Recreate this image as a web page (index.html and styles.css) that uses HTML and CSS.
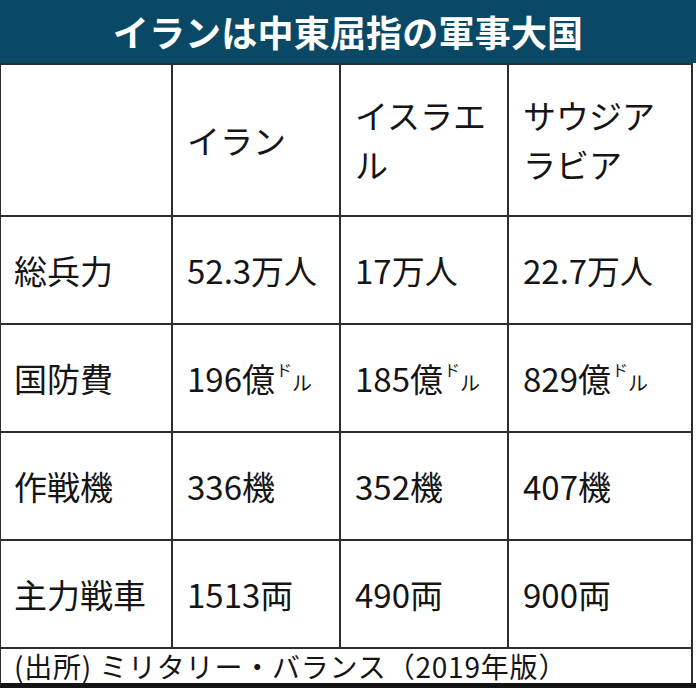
FILE: index.html
```html
<!DOCTYPE html>
<html lang="ja">
<head>
<meta charset="utf-8">
<title>イランは中東屈指の軍事大国</title>
<link rel="stylesheet" href="styles.css">
</head>
<body>
<div class="frame">
  <header class="title">イランは中東屈指の軍事大国</header>
  <div class="table">
    <div class="cell head"></div>
    <div class="cell head">イラン</div>
    <div class="cell head">イスラエ<br>ル</div>
    <div class="cell head">サウジア<br>ラビア</div>

    <div class="cell">総兵力</div>
    <div class="cell">52.3万人</div>
    <div class="cell">17万人</div>
    <div class="cell">22.7万人</div>

    <div class="cell">国防費</div>
    <div class="cell">196億<span class="unit"><span class="do">ド</span><span class="ru">ル</span></span></div>
    <div class="cell">185億<span class="unit"><span class="do">ド</span><span class="ru">ル</span></span></div>
    <div class="cell">829億<span class="unit"><span class="do">ド</span><span class="ru">ル</span></span></div>

    <div class="cell">作戦機</div>
    <div class="cell">336機</div>
    <div class="cell">352機</div>
    <div class="cell">407機</div>

    <div class="cell">主力戦車</div>
    <div class="cell">1513両</div>
    <div class="cell">490両</div>
    <div class="cell">900両</div>

    <div class="cell source">(出所) ミリタリー・バランス（2019年版）</div>
  </div>
</div>
</body>
</html>
```
FILE: styles.css
```css
html, body {
  margin: 0;
  padding: 0;
  background: #ffffff;
}

.frame {
  width: 696px;
  height: 688px;
  box-sizing: border-box;
  border-bottom: 5px solid #141414;
  font-family: "Noto Sans CJK JP", "Noto Sans", sans-serif;
  color: #151515;
  overflow: hidden;
}

.title {
  height: 63px;
  background: #0a4966;
  color: #ffffff;
  font-weight: 700;
  font-size: 36px;
  line-height: 63px;
  text-align: center;
  letter-spacing: 0.2px;
}

.table {
  width: 693px;
  box-sizing: border-box;
  display: grid;
  grid-template-columns: 170px 166px 166px 182px;
  grid-template-rows: 150px 106px 106px 106px 106px 34px;
  gap: 2px;
  padding: 2px 2px 0 1px;
  background: #2e2e2e;
}

.cell {
  background: #ffffff;
  display: flex;
  align-items: center;
  padding: 0 0 0 14px;
  font-size: 33px;
  line-height: 49px;
  white-space: nowrap;
}

.cell:nth-child(4n+1) {
  padding-left: 13px;
}

.unit {
  display: inline-flex;
  align-items: flex-start;
  height: 30px;
  margin-left: 1px;
  line-height: 1;
}

.unit .do {
  font-size: 16px;
  margin-top: -2px;
}

.unit .ru {
  font-size: 20px;
  margin-top: 10px;
}

.source {
  grid-column: 1 / -1;
  padding-left: 10px;
  font-size: 28px;
  line-height: 34px;
  letter-spacing: 0.8px;
}
```
